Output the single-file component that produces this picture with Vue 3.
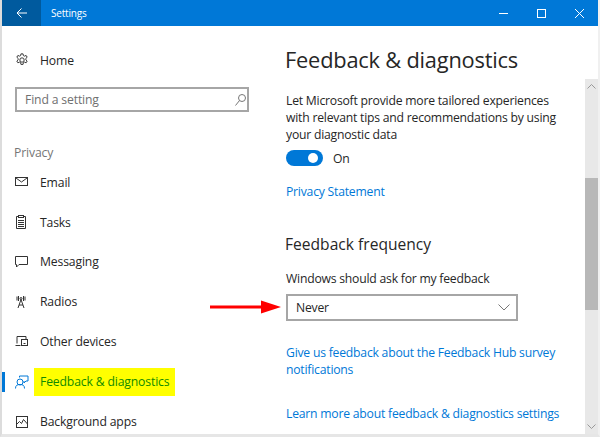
<script setup>
const items = [
  { label: 'Email', icon: 'email' },
  { label: 'Tasks', icon: 'tasks' },
  { label: 'Messaging', icon: 'msg' },
  { label: 'Radios', icon: 'radio' },
  { label: 'Other devices', icon: 'devices' },
  { label: 'Feedback & diagnostics', icon: 'feedback', active: true },
  { label: 'Background apps', icon: 'bg' },
]
</script>

<template>
  <div class="window">
    <header class="titlebar">
      <div class="back">
        <svg width="12" height="12" viewBox="0 0 12 12" fill="none" stroke="#fff" stroke-width="1">
          <path d="M11 6H1M5.500 1.500L1 6l4.500 4.500" />
        </svg>
      </div>
      <span class="title">Settings</span>
      <div class="controls">
        <svg class="ctl" width="9" height="9" viewBox="0 0 9 9" stroke="#fff" fill="none"><path d="M0 4.500h9" /></svg>
        <svg class="ctl" width="9" height="9" viewBox="0 0 9 9" stroke="#fff" fill="none"><rect x=".5" y=".5" width="8" height="8" /></svg>
        <svg class="ctl" width="9" height="9" viewBox="0 0 9 9" stroke="#fff" fill="none"><path d="M0 0l9 9M9 0L0 9" /></svg>
      </div>
    </header>

    <div class="body">
      <aside class="sidebar">
        <div class="home">
          <svg class="ico" width="14" height="14" viewBox="0 0 16 16" fill="none" stroke="#333" stroke-width="1.100">
            <circle cx="8" cy="8" r="2.500" />
            <path d="M6.800 1h2.400l.4 2 1.200.6 1.900-.8 1.200 2-1.500 1.400v1.600l1.500 1.400-1.200 2-1.900-.8-1.200.6-.4 2H6.800l-.4-2-1.200-.6-1.900.8-1.200-2 1.500-1.400V6.200L2.100 4.800l1.200-2 1.900.8 1.200-.6z" />
          </svg>
          <span>Home</span>
        </div>
        <div class="search">
          <span>Find a setting</span>
          <svg width="11" height="12" viewBox="0 0 11 12" fill="none" stroke="#777" stroke-width="1">
            <circle cx="7" cy="4" r="3.500" />
            <path d="M4.500 6.500L.5 11.500" />
          </svg>
        </div>
        <div class="group">Privacy</div>
        <nav class="nav">
          <div v-for="item in items" :key="item.label" class="row" :class="{ active: item.active }">
            <span v-if="item.active" class="marker"></span>
            <svg class="ico" width="14" height="14" viewBox="0 0 14 14" fill="none" :stroke="item.active ? '#0078d7' : '#333'" stroke-width="1">
              <template v-if="item.icon === 'email'">
                <rect x=".5" y="2.500" width="12" height="8" />
                <path d="M1 3l5.500 4L12 3" />
              </template>
              <template v-else-if="item.icon === 'tasks'">
                <path d="M3.500 1.500H1.500v12h9v-12H8.500" />
                <rect x="3.500" y=".5" width="5" height="2" />
                <path d="M3 5.500h6M3 7.500h6M3 9.500h6M3 11.500h6" />
              </template>
              <template v-else-if="item.icon === 'msg'">
                <path d="M.5 1.500h12v8H4l-2.500 2.500V9.500h-1z" />
              </template>
              <template v-else-if="item.icon === 'radio'">
                <circle cx="6" cy="3.500" r="1" />
                <path d="M3.500 1v5M8.500 1v5M2 1.500v4M10 1.500v4M6 4.500L3 13M6 4.500L9 13M4 10h4" />
              </template>
              <template v-else-if="item.icon === 'devices'">
                <path d="M2 8.500V1.500h9V4M.5 10.500h5" />
                <rect x="6.500" y="4.500" width="6" height="6" />
                <path d="M8.500 8.500h2" />
              </template>
              <template v-else-if="item.icon === 'feedback'">
                <circle cx="5" cy="7" r="3" />
                <path d="M.5 13.500c0-3 1.500-4 4.500-4s4.500 1 4.500 4M4.500 2.500V1h8.500v5h-2L9 8V6" />
              </template>
              <template v-else>
                <rect x="1.500" y="1.500" width="11" height="11" />
                <path d="M1.500 9.500l3-3 2 2 2-4 4 4.500" />
              </template>
            </svg>
            <span class="label">{{ item.label }}</span>
          </div>
        </nav>
      </aside>

      <main class="content">
        <h1>Feedback &amp; diagnostics</h1>
        <p class="desc">Let Microsoft provide more tailored experiences with relevant tips and recommendations by using your diagnostic data</p>
        <div class="toggle-row">
          <span class="toggle"><span class="knob"></span></span>
          <span>On</span>
        </div>
        <a class="link statement">Privacy Statement</a>
        <h2>Feedback frequency</h2>
        <div class="ask">Windows should ask for my feedback</div>
        <div class="select-row">
          <div class="select">
            <span>Never</span>
            <svg width="12" height="7" viewBox="0 0 12 7" fill="none" stroke="#777" stroke-width="1"><path d="M.5.500L6 6l5.500-5.500" /></svg>
          </div>
          <svg class="arrow" width="71" height="14" viewBox="0 0 71 14">
            <path d="M0 5.500h51V.5L71 7 51 13.500V8.500H0z" fill="#ff0000" />
          </svg>
        </div>
        <a class="link survey">Give us feedback about the Feedback Hub survey notifications</a>
        <a class="link learn">Learn more about feedback &amp; diagnostics settings</a>
      </main>

      <div class="scrollbar">
        <svg class="chev" width="9" height="5" viewBox="0 0 9 5" fill="none" stroke="#999"><path d="M.5 4.500l4-4 4 4" /></svg>
        <div class="thumb"></div>
        <svg class="chev down" width="9" height="5" viewBox="0 0 9 5" fill="none" stroke="#999"><path d="M.5.500l4 4 4-4" /></svg>
      </div>
    </div>
  </div>
</template>

<style scoped>
.window {
  width: 600px;
  height: 437px;
  box-sizing: border-box;
  border-left: 2px solid #dcdcdc;
  border-right: 2px solid #f0f0f0;
  border-bottom: 3px solid #e6e6e6;
  background: #fff;
  overflow: hidden;
  display: flex;
  flex-direction: column;
  font-family: "Open Sans", "Noto Sans", sans-serif;
  font-size: 12.200px;
  letter-spacing: -0.150px;
  color: #262626;
}
.titlebar {
  height: 26px;
  flex: none;
  background: #0078d7;
  color: #fff;
  display: flex;
  align-items: center;
  font-size: 10px;
  letter-spacing: -0.200px;
}
.back {
  width: 39px;
  height: 26px;
  background: #005a9e;
  display: flex;
  align-items: center;
  justify-content: center;
}
.title { margin-left: 10px; }
.controls {
  margin-left: auto;
  display: flex;
  gap: 29px;
  padding-right: 14px;
}
.ctl { display: block; }
.body {
  flex: 1;
  display: flex;
  min-height: 0;
}
.sidebar {
  width: 269px;
  flex: none;
  box-sizing: border-box;
  padding-top: 22px;
  overflow: hidden;
}
.home {
  display: flex;
  align-items: center;
  height: 24px;
  padding-left: 13px;
}
.home .ico { margin-right: 11px; }
.search {
  margin: 15px 0 0 13px;
  width: 234px;
  height: 25px;
  box-sizing: border-box;
  border: 2px solid #a6a6a6;
  display: flex;
  align-items: center;
  justify-content: space-between;
  padding: 0 1px 0 8px;
  color: #707070;
}
.group {
  margin: 32px 0 0 12px;
  color: #767676;
  height: 18px;
  line-height: 18px;
}
.nav {
  margin-top: 0.250px;
  display: flex;
  flex-direction: column;
}
.row {
  position: relative;
  height: 39.900px;
  display: flex;
  align-items: center;
  padding-left: 13px;
}
.row .ico { margin-right: 11px; flex: none; }
.marker {
  position: absolute;
  left: 0;
  top: 10px;
  width: 3px;
  height: 20px;
  background: #0078d7;
}
.active .label {
  background: #ffff00;
  color: #118a00;
  margin-left: -6px;
  padding: 5px 6px 6px;
}
.content {
  flex: 1;
  min-width: 0;
  box-sizing: border-box;
  padding: 17px 0 0 15px;
  letter-spacing: -0.220px;
}
h1 {
  margin: 0 0 0 -1px;
  font-size: 21.800px;
  font-weight: 400;
  line-height: 34px;
  letter-spacing: -0.200px;
}
.desc {
  margin: 15px 0 0;
  line-height: 17px;
  max-width: 285px;
}
.toggle-row {
  margin-top: 6px;
  display: flex;
  align-items: center;
  gap: 10px;
  height: 18px;
}
.toggle {
  width: 37px;
  height: 16px;
  border-radius: 8px;
  background: #0078d7;
  position: relative;
}
.knob {
  position: absolute;
  right: 5px;
  top: 3px;
  width: 10px;
  height: 10px;
  border-radius: 50%;
  background: #fff;
}
.link {
  display: block;
  color: #0078d7;
  max-width: 285px;
}
.statement { margin-top: 16px; line-height: 18px; }
h2 {
  margin: 31px 0 0 -1px;
  font-size: 15.600px;
  font-weight: 400;
  line-height: 24px;
  letter-spacing: 0;
}
.ask { margin-top: 14px; line-height: 18px; }
.select-row {
  position: relative;
  margin-top: 6px;
}
.select {
  width: 232px;
  height: 27px;
  box-sizing: border-box;
  border: 2px solid #a6a6a6;
  display: flex;
  align-items: center;
  justify-content: space-between;
  padding: 0 6px 0 8px;
}
.arrow {
  position: absolute;
  left: -76px;
  top: 6px;
}
.survey { margin-top: 23px; line-height: 17px; }
.learn { margin-top: 27px; line-height: 18px; }
.scrollbar {
  width: 13px;
  flex: none;
  margin-top: 53px;
  background: #e8e8e8;
  position: relative;
  display: flex;
  flex-direction: column;
  align-items: center;
}
.chev { margin-top: 5px; }
.chev.down {
  position: absolute;
  bottom: 5px;
  margin: 0;
}
.thumb {
  position: absolute;
  top: 99px;
  left: 0;
  width: 100%;
  height: 132px;
  background: #b8b8b8;
}
</style>
